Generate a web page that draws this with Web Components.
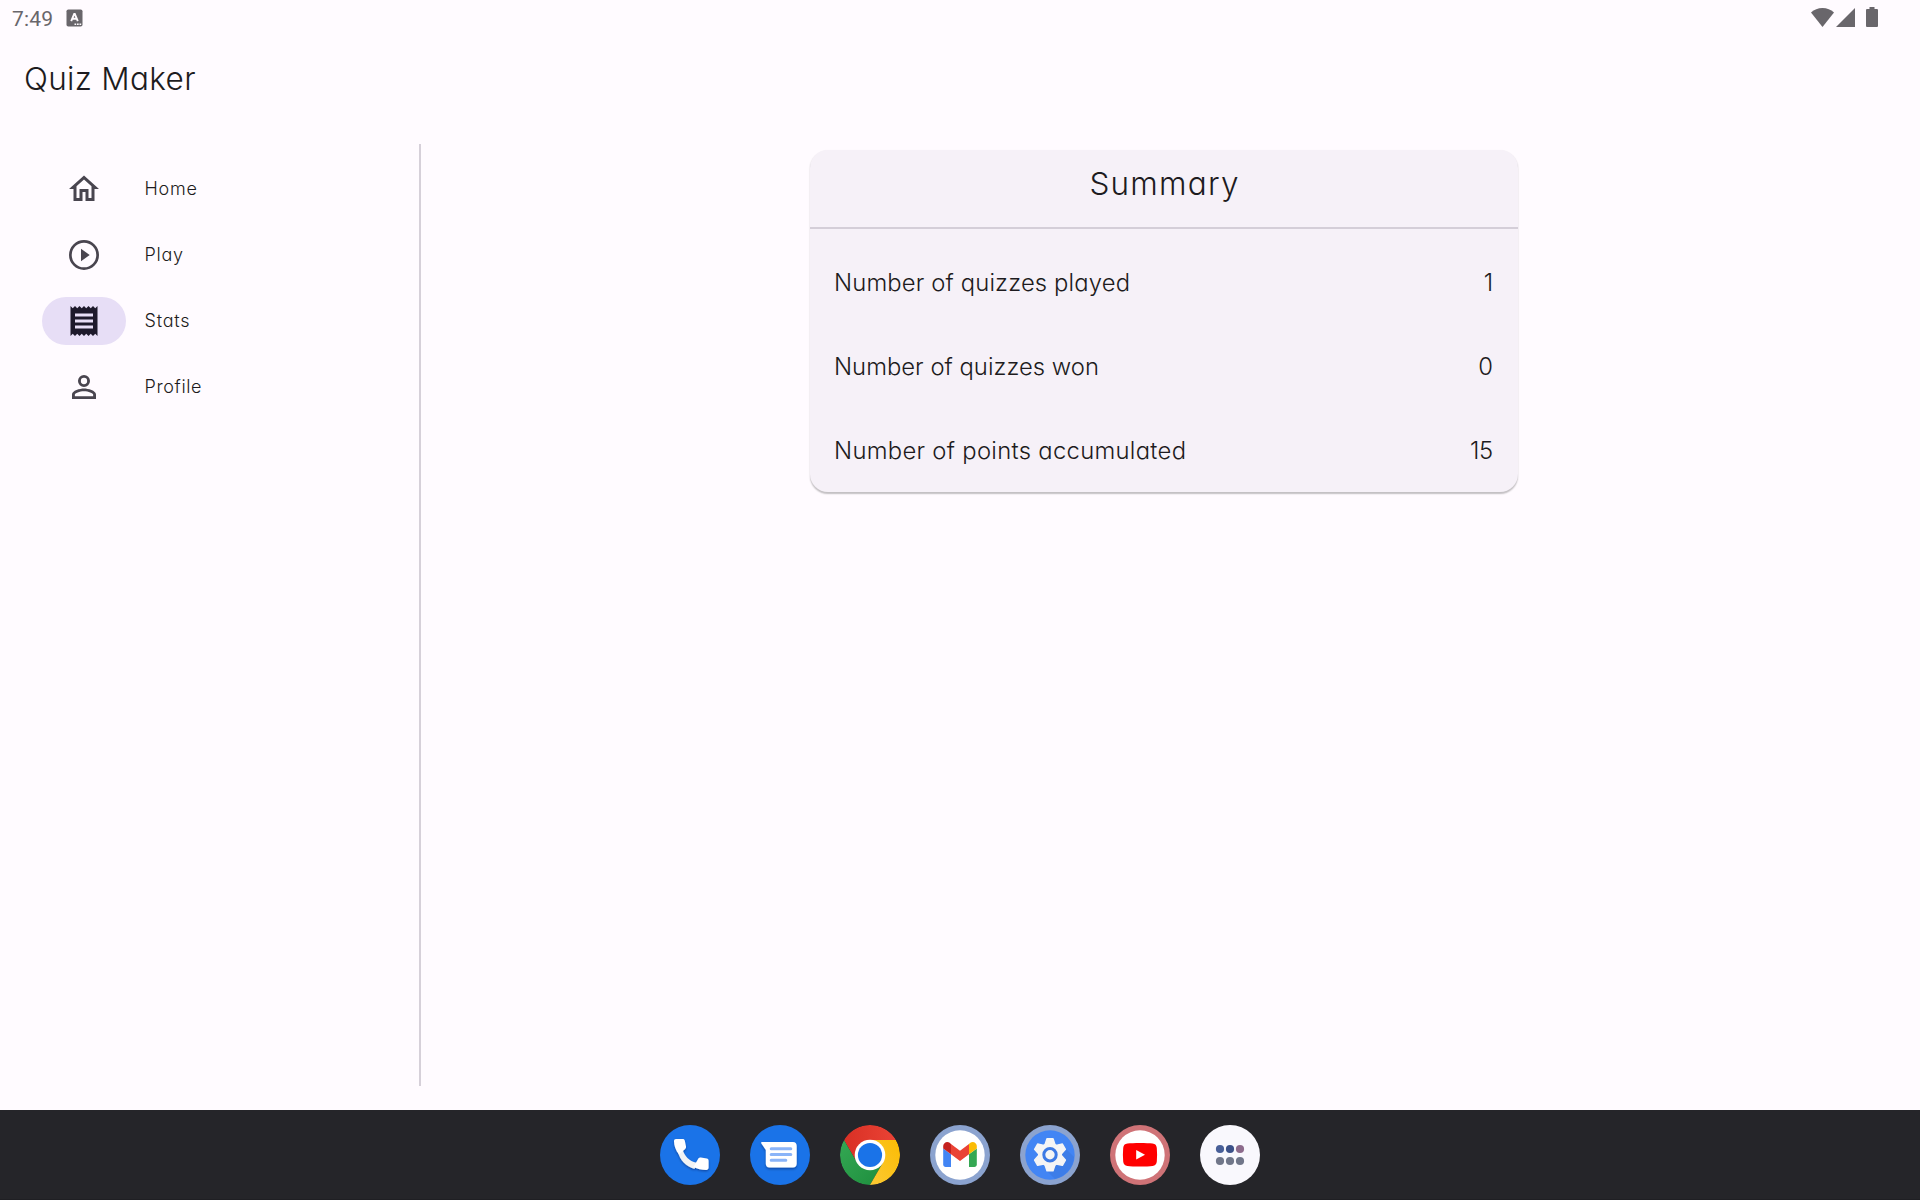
<!DOCTYPE html>
<html lang="en">
<head>
<meta charset="utf-8">
<title>Quiz Maker</title>
<style>
html,body{margin:0;height:100%;overflow:hidden;background:#fffbff}
</style>
</head>
<body>
<quiz-app></quiz-app>
<script>
const define = (name, html, after) => {
  const t = document.createElement('template');
  t.innerHTML = html;
  customElements.define(name, class extends HTMLElement {
    constructor() {
      super();
      this.attachShadow({ mode: 'open' }).append(t.content.cloneNode(true));
    }
    connectedCallback() { if (after) after.call(this, this.shadowRoot); }
  });
};

/* Text label tracked so that its glyphs span the given advance width. */
define('fit-text', `
<style>
:host{display:block;white-space:nowrap;font-family:Inter,sans-serif;font-weight:280;font-feature-settings:"cv11","kern";color:#1d1b20}
span{display:inline-block}
</style><span><slot></slot></span>`, function (root) {
  const target = +this.getAttribute('span'), n = this.textContent.length;
  if (!target || n < 2) return;
  const el = root.querySelector('span');
  const ls = (target - el.getBoundingClientRect().width) / (n - 1);
  el.style.letterSpacing = ls.toFixed(3) + 'px';
  el.style.marginRight = (-ls).toFixed(3) + 'px';
});

define('status-bar', `
<style>
:host{display:flex;justify-content:space-between;height:36px;box-sizing:border-box;padding:0 40px 0 12px;color:#69666b;font:21px/38px Roboto,sans-serif}
.l{display:flex;gap:13px}.l svg{margin-top:9px}
.t{letter-spacing:.2px}
.r svg{display:block}
</style>
<div class="l"><span class="t">7:49</span>
<svg width="17" height="18" viewBox="0 0 17 18"><rect x=".5" y=".5" width="16" height="17" rx="1.8" fill="#69666b"/><path d="M5.200 12.200 8.200 5h.6l3 7.200M6.400 9.800h4.200" fill="none" stroke="#fffbff" stroke-width="1.900"/><path d="M8.500 15.300h7" stroke="#fffbff" stroke-width="1.400" stroke-dasharray="1.700 .8"/></svg></div>
<div class="r"><svg width="69" height="36" viewBox="0 0 69 36" fill="#69666b"><path d="M0 12.600C3.200 9.600 7 8 11.500 8S19.800 9.600 23 12.600L11.500 27Z"/><path d="M44 8v19H25Z"/><path d="M58.500 7h5v2h2.200c.8 0 1.300.5 1.300 1.300v15.400c0 .8-.5 1.300-1.300 1.300h-9.400c-.8 0-1.300-.5-1.300-1.300V10.300c0-.8.5-1.300 1.300-1.300h2.200Z"/></svg></div>`);

define('nav-item', `
<style>
:host{display:flex;align-items:center;gap:18.500px;height:48px}
.pill{width:84px;height:48px;border-radius:24px;display:flex;align-items:center;justify-content:center;color:#49454f}
:host([selected]) .pill{background:#e7def6;color:#1d192b}
::slotted(svg){width:36px;height:36px;fill:currentColor;display:block}
::slotted(fit-text){font-size:18px;line-height:48px}
</style><div class="pill"><slot name="icon"></slot></div><slot></slot>`);

define('stat-row', `
<style>
:host{display:flex;justify-content:space-between;height:36px;font-size:23.800px;line-height:36px}
</style><slot></slot><slot name="value"></slot>`);

define('summary-card', `
<style>
:host{display:block;box-sizing:border-box;width:708px;height:342px;border-radius:18px;background:#f6f1f8;box-shadow:0 1.500px 1.500px rgba(0,0,0,.2),0 2px 2px rgba(0,0,0,.05)}
header{height:77px;display:flex;justify-content:center;font-size:31.500px;line-height:68px;border-bottom:2px solid #d4ced8}
.rows{display:flex;flex-direction:column;gap:48px;padding:36px 25px 0 24px}
</style><header><slot name="title"></slot></header><div class="rows"><slot></slot></div>`);

define('app-icon', `
<style>:host{display:block;width:60px;height:60px}::slotted(svg){display:block;width:60px;height:60px;overflow:visible}</style><slot></slot>`);

define('task-bar', `
<style>:host{display:flex;justify-content:center;align-items:center;gap:30px;height:90px;background:#252529;box-sizing:border-box;border-bottom:1px solid #1f1f23;padding-top:1px}</style>
<app-icon><svg viewBox="0 0 60 60"><defs><filter id="s" x="-30%" y="-30%" width="160%" height="170%"><feDropShadow dx="0" dy="1.200" stdDeviation="1.200" flood-color="#003" flood-opacity=".4"/></filter></defs><circle cx="30" cy="30" r="30" fill="#1a73e8"/><g filter="url(#s)"><path d="M18 27 22.500 24.500C24.500 31 29 36 36.500 37.800L34.500 44C25.500 41 20 35.500 18 27Z" fill="#f1f3f4"/><path d="M16 14h6.600c1.200 0 2 .6 2.200 1.700L26 21.500c.2 1-.1 1.700-.8 2.400L19 29.500C15.500 25 14 20.500 14 16.200 14 14.800 14.800 14 16 14ZM38.500 33.200c.6-.7 1.400-.9 2.300-.7l6 1.100c1.200.2 1.800 1.100 1.800 2.300v6.600c0 1.500-.9 2.500-2.300 2.500-4.800 0-9-1.100-12.800-3Z" fill="#fff"/></g></svg></app-icon>
<app-icon><svg viewBox="0 0 60 60"><defs><filter id="m" x="-30%" y="-30%" width="160%" height="170%"><feDropShadow dx="0" dy="1.500" stdDeviation="1.300" flood-color="#003" flood-opacity=".4"/></filter></defs><circle cx="30" cy="30" r="30" fill="#1a73e8"/><path filter="url(#m)" d="M12 17h31c2.300 0 3.700 1.400 3.700 3.700v18c0 2.300-1.400 3.700-3.700 3.700H19.500c-2.300 0-3.700-1.400-3.700-3.700V25L11.200 18.200C10.900 17.500 11.200 17 12 17Z" fill="#fff"/><path d="M21.200 23.700h19.600M21.200 29.500h19.600M21.200 35.300h14.600" stroke="#8ab4f8" stroke-width="3" stroke-linecap="round"/></svg></app-icon>
<app-icon><svg viewBox="0 0 60 60"><defs><clipPath id="c"><circle cx="30" cy="30" r="30"/></clipPath><linearGradient id="r" x2="1"><stop stop-color="#d93025"/><stop offset="1" stop-color="#ea4335"/></linearGradient><linearGradient id="g" y2="1"><stop stop-color="#34a853"/><stop offset="1" stop-color="#1e8e3e"/></linearGradient><linearGradient id="y" x1="1" x2="0" y2="1"><stop stop-color="#fbbc04"/><stop offset="1" stop-color="#fcc934"/></linearGradient></defs><g clip-path="url(#c)"><path d="M30 0A30 30 0 0 1 56 14.900H30L17 37.500 4 15A30 30 0 0 1 30 0Z" fill="url(#r)"/><path d="M4 15 17 37.500 30 45l13-7.500L30 60A30 30 0 0 1 4 15Z" fill="url(#g)"/><path d="M56 14.900A30 30 0 0 1 30 60L43 37.500 30 14.900Z" fill="url(#y)"/></g><circle cx="30" cy="30" r="15.300" fill="#fff"/><circle cx="30" cy="30" r="12.100" fill="#1a73e8"/></svg></app-icon>
<app-icon><svg viewBox="0 0 60 60"><circle cx="30" cy="30" r="30" fill="#8ba3cf"/><circle cx="30" cy="30" r="24.700" fill="#fff"/><path d="M13.200 23.500 21 29.200v12.900h-5.300c-1.500 0-2.500-1-2.500-2.500Z" fill="#4285f4"/><path d="M39 29.200 46.800 23.500v16.100c0 1.500-1 2.500-2.500 2.500H39Z" fill="#34a853"/><path d="M13.200 23.500v-2.400c0-3.500 4-5.300 6.500-3.300L21 18.900v10.300Z" fill="#c5221f"/><path d="M21 18.900 30 25.700 39 18.900v10.300l-9 6.800-9-6.800Z" fill="#ea4335"/><path d="M39 29.200V18.900l1.300-1.100c2.500-2 6.500-.2 6.500 3.300v2.400Z" fill="#fbbc04"/></svg></app-icon>
<app-icon><svg viewBox="0 0 60 60"><circle cx="30" cy="30" r="30" fill="#8ba3cf"/><circle cx="30" cy="30" r="24.700" fill="#4285f4"/><path d="M46 24 54 32A24.500 24.500 0 0 1 35 54L27 46Z" fill="#3b78e0" opacity=".6"/><g transform="translate(30 29.700)"><g fill="#f5f5f5" stroke="#f5f5f5" stroke-width="1.500" stroke-linejoin="round"><circle r="11.300"/><g id="a"><path d="M-5-10-3-16H3L5-10Z"/><path d="M-5-10-3-16H3L5-10Z" transform="rotate(60)"/><path d="M-5-10-3-16H3L5-10Z" transform="rotate(120)"/></g><use href="#a" transform="rotate(180)"/></g><circle r="6.200" fill="#f5f5f5" stroke="#3d7ae5" stroke-width="3"/></g></svg></app-icon>
<app-icon><svg viewBox="0 0 60 60"><circle cx="30" cy="30" r="30" fill="#cf7377"/><circle cx="30" cy="30" r="24.700" fill="#fff"/><path d="M17.500 18.600c5-.8 20-.8 25 0 2.900.4 4 1.700 4.300 4.400.4 4.500.4 9 0 13.500-.3 2.700-1.400 4-4.300 4.400-5 .8-20 .8-25 0-2.900-.4-4-1.700-4.300-4.400-.4-4.500-.4-9 0-13.500.3-2.700 1.400-4 4.300-4.400Z" fill="#f00"/><path d="M26.200 25v9.600l8.800-4.800Z" fill="#fff"/></svg></app-icon>
<app-icon><svg viewBox="0 0 60 60"><circle cx="30" cy="30" r="30" fill="#f9f8fd"/><circle cx="20" cy="24" r="4.100" fill="#485f98"/><circle cx="30" cy="24" r="4.100" fill="#3c5189"/><circle cx="40" cy="24" r="4.100" fill="#8d6b8c"/><g fill="#707689"><circle cx="20" cy="36" r="4.100"/><circle cx="30" cy="36" r="4.100"/><circle cx="40" cy="36" r="4.100"/></g></svg></app-icon>`);

define('quiz-app', `
<style>
:host{display:flex;flex-direction:column;height:1200px;width:1920px;background:#fffbff}
.title{height:84px;padding:0 0 0 24px;font-size:31.500px;line-height:86px}
main{flex:1;display:flex;padding:24px 0}
nav{width:377px;padding:21px 0 0 42px;display:flex;flex-direction:column;gap:18px}
.rule{width:2px;background:#d6d0d9}
section{flex:1;display:flex;justify-content:center;padding:6px 13px 0 0;align-items:flex-start}
</style>
<status-bar></status-bar>
<fit-text class="title" span="171.500">Quiz Maker</fit-text>
<main>
<nav>
<nav-item><svg slot="icon" viewBox="0 0 24 24"><path d="M12 5.690l5 4.500V18h-2v-6H9v6H7v-7.810l5-4.500M12 3 2 12h3v8h6v-6h2v6h6v-8h3L12 3Z"/></svg><fit-text span="52.500">Home</fit-text></nav-item>
<nav-item><svg slot="icon" viewBox="0 0 24 24"><path d="M12 2a10 10 0 1 0 0 20 10 10 0 0 0 0-20Zm0 18.200a8.200 8.200 0 1 1 0-16.400 8.200 8.200 0 0 1 0 16.400ZM10 16.200l5.800-4.200L10 7.800Z"/></svg><fit-text span="38.500">Play</fit-text></nav-item>
<nav-item selected><svg slot="icon" viewBox="0 0 24 24"><path fill-rule="evenodd" d="M19.500 3.500 18 2l-1.500 1.500L15 2l-1.500 1.500L12 2l-1.500 1.500L9 2 7.500 3.500 6 2 4.500 3.500 3 2v20l1.500-1.500L6 22l1.500-1.500L9 22l1.500-1.500L12 22l1.500-1.500L15 22l1.500-1.500L18 22l1.500-1.500L21 22V2l-1.500 1.500ZM18 17H6v-2h12v2Zm0-4H6v-2h12v2Zm0-4H6V7h12v2Z"/></svg><fit-text span="45">Stats</fit-text></nav-item>
<nav-item><svg slot="icon" viewBox="0 0 24 24"><path fill-rule="evenodd" d="M12 4a4 4 0 1 0 0 8 4 4 0 0 0 0-8Zm0 1.900a2.100 2.100 0 1 1 0 4.200 2.100 2.100 0 0 1 0-4.200ZM12 13c-2.670 0-8 1.340-8 4v3h16v-3c0-2.660-5.330-4-8-4Zm0 1.900c2.970 0 6.100 1.460 6.100 2.100v1.100H5.900V17c0-.64 3.130-2.100 6.100-2.100Z"/></svg><fit-text span="57">Profile</fit-text></nav-item>
</nav>
<div class="rule"></div>
<section>
<summary-card>
<fit-text slot="title" span="149">Summary</fit-text>
<stat-row><fit-text span="296">Number of quizzes played</fit-text><fit-text slot="value">1</fit-text></stat-row>
<stat-row><fit-text span="265">Number of quizzes won</fit-text><fit-text slot="value">0</fit-text></stat-row>
<stat-row><fit-text span="352">Number of points accumulated</fit-text><fit-text slot="value" span="23">15</fit-text></stat-row>
</summary-card>
</section>
</main>
<task-bar></task-bar>`);
</script>
</body>
</html>
